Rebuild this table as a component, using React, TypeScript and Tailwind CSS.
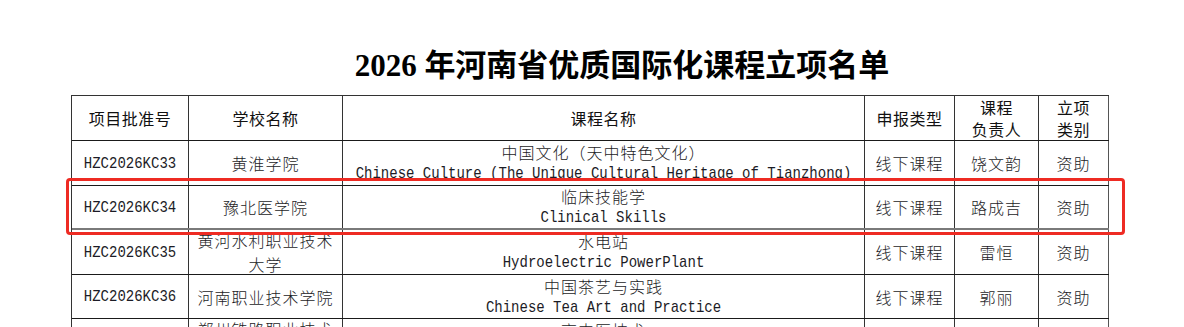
import React from 'react';

type Row = {
  id: string;
  school: string[];
  cn: string;
  en: string;
  kind: string;
  owner: string;
  level: string;
  h: string;
  line: string;
};

const ROWS: Row[] = [
  {
    id: 'HZC2026KC33',
    school: ['黄淮学院'],
    cn: '中国文化（天中特色文化）',
    en: 'Chinese Culture (The Unique Cultural Heritage of Tianzhong)',
    kind: '线下课程',
    owner: '饶文韵',
    level: '资助',
    h: 'h-[45px]',
    line: 'border-b border-[#1a1a1a]',
  },
  {
    id: 'HZC2026KC34',
    school: ['豫北医学院'],
    cn: '临床技能学',
    en: 'Clinical Skills',
    kind: '线下课程',
    owner: '路成吉',
    level: '资助',
    h: 'h-[44px]',
    line: 'border-b-2 border-[#7a7a7a]',
  },
  {
    id: 'HZC2026KC35',
    school: ['黄河水利职业技术', '大学'],
    cn: '水电站',
    en: 'Hydroelectric PowerPlant',
    kind: '线下课程',
    owner: '雷恒',
    level: '资助',
    h: 'h-[45px]',
    line: 'border-b border-[#1a1a1a]',
  },
  {
    id: 'HZC2026KC36',
    school: ['河南职业技术学院'],
    cn: '中国茶艺与实践',
    en: 'Chinese Tea Art and Practice',
    kind: '线下课程',
    owner: '郭丽',
    level: '资助',
    h: 'h-[44px]',
    line: 'border-b border-[#1a1a1a]',
  },
  {
    id: 'HZC2026KC37',
    school: ['郑州铁路职业技术', '学院'],
    cn: '高中医技术',
    en: 'Traditional Chinese Medicine',
    kind: '线下课程',
    owner: '张华',
    level: '资助',
    h: 'h-[45px]',
    line: 'border-b border-[#1a1a1a]',
  },
];

const cjk = "font-['Noto_Sans_CJK_SC',sans-serif]";
const mono = "font-['Liberation_Mono','Noto_Sans_CJK_SC',monospace]";
const cell = 'flex items-center justify-center overflow-hidden border-r border-[#333] text-center';

function Mono({ children }: { children: React.ReactNode }) {
  // tall half-width glyphs like the original document font
  return (
    <span className={`${mono} inline-block whitespace-nowrap text-[14px] leading-[21px] tracking-normal [transform:scaleY(1.2)]`}>
      {children}
    </span>
  );
}

export default function App() {
  return (
    <div className="relative w-[1184px] h-[327px] overflow-hidden bg-white text-[#1c1c26]">
      {/* title */}
      <div className="h-[95px] flex justify-center pl-[60px] pt-[46px]">
        <h1 className="font-['Liberation_Serif','Noto_Sans_CJK_SC',serif] text-[31px] leading-[40px] font-bold text-black whitespace-nowrap">
          2026 年河南省优质国际化课程立项名单
        </h1>
      </div>

      {/* table */}
      <div className="ml-[71px] w-[1038px] border-l border-t border-[#333]">
        <div className={`grid grid-cols-[117px_154px_522px_90px_84px_70px] h-[45px] border-b border-[#1a1a1a] ${cjk} text-[16px] tracking-[0.5px] text-[#111]`}>
          <div className={cell}>项目批准号</div>
          <div className={cell}>学校名称</div>
          <div className={cell}>课程名称</div>
          <div className={cell}>申报类型</div>
          <div className={`${cell} flex-col leading-[22px]`}>
            <span>课程</span>
            <span>负责人</span>
          </div>
          <div className={`${cell} flex-col leading-[22px] border-[#555]`}>
            <span>立项</span>
            <span>类别</span>
          </div>
        </div>

        {ROWS.map((r) => (
          <div
            key={r.id}
            className={`grid grid-cols-[117px_154px_522px_90px_84px_70px] ${r.h} ${r.line} ${cjk} text-[16px] tracking-[1px] font-light`}
          >
            <div className={cell}>
              <Mono>{r.id}</Mono>
            </div>
            <div className={`${cell} flex-col leading-[24px]`}>
              {r.school.map((s) => (
                <span key={s} className="whitespace-nowrap">{s}</span>
              ))}
            </div>
            <div className={`${cell} flex-col leading-[21px]`}>
              <span className="whitespace-nowrap">{r.cn}</span>
              <Mono>{r.en}</Mono>
            </div>
            <div className={cell}>{r.kind}</div>
            <div className={cell}>{r.owner}</div>
            <div className={`${cell} border-[#555]`}>{r.level}</div>
          </div>
        ))}
      </div>

      {/* highlight */}
      <div className="absolute left-[66px] top-[178px] w-[1059px] h-[57px] rounded-[4px] border-[3px] border-[#ee2b23]" />
    </div>
  );
}
